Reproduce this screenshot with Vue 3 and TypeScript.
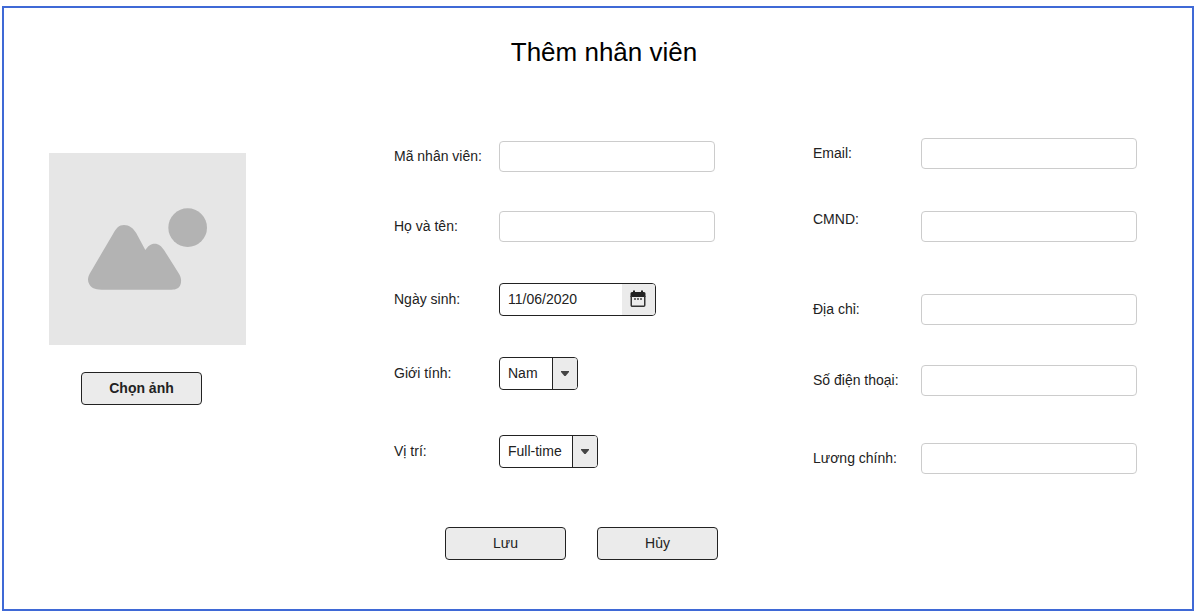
<script setup lang="ts">
import { reactive } from 'vue'

interface TextField {
  key: 'email' | 'idCard' | 'address' | 'phone' | 'salary'
  label: string
  top?: boolean
}

const contactFields: TextField[] = [
  { key: 'email', label: 'Email:' },
  { key: 'idCard', label: 'CMND:', top: true },
  { key: 'address', label: 'Địa chỉ:' },
  { key: 'phone', label: 'Số điện thoại:' },
  { key: 'salary', label: 'Lương chính:' },
]

const employee = reactive({
  code: '',
  name: '',
  birthday: '11/06/2020',
  gender: 'Nam',
  position: 'Full-time',
  email: '',
  idCard: '',
  address: '',
  phone: '',
  salary: '',
})
</script>

<template>
  <main class="frame">
    <h1 class="title">Thêm nhân viên</h1>

    <form class="form" @submit.prevent>
      <section class="photo">
        <svg class="picture" viewBox="0 0 591 576" preserveAspectRatio="none" aria-hidden="true">
          <rect width="591" height="576" fill="#e6e6e6" />
          <circle cx="416" cy="224" r="58" fill="#b3b3b3" />
          <path
            fill="#b3b3b3"
            d="M122 362 L192 243 C201 226 210 216 225 216 C241 216 252 225 262 241 L289 291 C297 279 305 272 317 272 C329 272 337 279 345 291 L390 362 C397 373 398 386 394 396 C389 406 382 410 368 410 H157 C137 410 126 404 121 394 C115 384 116 373 122 362 Z"
          />
        </svg>
        <button class="btn btn-photo" type="button">Chọn ảnh</button>
      </section>

      <section class="personal">
        <div class="rows rows-personal">
          <div class="field">
            <label for="code">Mã nhân viên:</label>
            <input id="code" v-model="employee.code" class="text" type="text" />
          </div>
          <div class="field">
            <label for="name">Họ và tên:</label>
            <input id="name" v-model="employee.name" class="text" type="text" />
          </div>
          <div class="field">
            <label for="birthday">Ngày sinh:</label>
            <div class="box date">
              <input id="birthday" v-model="employee.birthday" type="text" />
              <button type="button" aria-label="Ngày sinh">
                <svg width="16" height="18" viewBox="0 0 16 18" aria-hidden="true">
                  <path d="M3 0.5h2v3H3zM11 0.5h2v3h-2z" fill="#222" />
                  <path d="M2 2h12a1.5 1.5 0 0 1 1.5 1.5V7H0.5V3.5A1.5 1.5 0 0 1 2 2z" fill="#222" />
                  <path
                    d="M1.25 6v9.2a1 1 0 0 0 1 1h11.5a1 1 0 0 0 1-1V6"
                    fill="none"
                    stroke="#333"
                    stroke-width="1.5"
                  />
                  <path d="M4 8.2h2v1.6H4zM7 8.2h2v1.6H7zM10 8.2h2v1.6h-2z" fill="#444" />
                </svg>
              </button>
            </div>
          </div>
          <div class="field">
            <label for="gender">Giới tính:</label>
            <div class="box select select-short">
              <select id="gender" v-model="employee.gender">
                <option>Nam</option>
              </select>
              <span class="arrow">
                <svg width="8" height="5" viewBox="0 0 8 5" aria-hidden="true">
                  <path d="M0 0h8v1L4.6 5H3.4L0 1z" fill="#444" />
                </svg>
              </span>
            </div>
          </div>
          <div class="field">
            <label for="position">Vị trí:</label>
            <div class="box select select-long">
              <select id="position" v-model="employee.position">
                <option>Full-time</option>
              </select>
              <span class="arrow">
                <svg width="8" height="5" viewBox="0 0 8 5" aria-hidden="true">
                  <path d="M0 0h8v1L4.6 5H3.4L0 1z" fill="#444" />
                </svg>
              </span>
            </div>
          </div>
        </div>
        <div class="actions">
          <button class="btn" type="submit">Lưu</button>
          <button class="btn" type="button">Hủy</button>
        </div>
      </section>

      <section class="rows rows-contact">
        <div v-for="f in contactFields" :key="f.key" class="field" :class="{ 'label-top': f.top }">
          <label :for="f.key">{{ f.label }}</label>
          <input :id="f.key" v-model="employee[f.key]" class="text" type="text" />
        </div>
      </section>
    </form>
  </main>
</template>

<style>
body {
  margin: 0;
  background: #fff;
}
</style>

<style scoped>
.frame {
  box-sizing: border-box;
  min-height: calc(100vh - 9px);
  margin: 6px 6px 3px 2px;
  border: 2px solid #3f69d6;
  padding: 28px 55px 48px 45px;
  color: #222;
  font: 14px/16px "Liberation Sans", Arial, sans-serif;
}

.title {
  margin: 0 0 70px;
  padding-left: 22px;
  color: #000;
  font-size: 26px;
  font-weight: 400;
  line-height: 32px;
  text-align: center;
}

.form {
  display: grid;
  grid-template-columns: 345fr 419fr 324fr;
  align-items: start;
}

.photo {
  display: flex;
  flex-direction: column;
  align-items: flex-start;
  gap: 27px;
  padding-top: 15px;
}

.picture {
  display: block;
  width: 197px;
  height: 192px;
}

.btn-photo {
  margin-left: 32px;
  font-weight: 700;
}

.rows {
  display: grid;
  align-items: start;
}

.rows-personal {
  padding-top: 3px;
  grid-template-columns: 321px;
  grid-template-rows: 70px 72px 74px 78px auto;
}

.rows-contact {
  grid-template-rows: 73px 83px 71px 78px auto;
}

.field {
  display: flex;
  align-items: center;
}

.field label {
  flex: none;
  width: 105px;
  padding-bottom: 2px;
}

.rows-contact label {
  width: 108px;
}

.field.label-top {
  align-items: flex-start;
}

.text {
  box-sizing: border-box;
  flex: 1;
  min-width: 0;
  height: 31px;
  border: 1px solid #ccc;
  border-radius: 4px;
  padding: 0 8px 2px;
  background: #fff;
  color: inherit;
  font: inherit;
}

.box {
  box-sizing: border-box;
  display: flex;
  height: 33px;
  border: 1px solid #222;
  border-radius: 4px;
  overflow: hidden;
  background: #fff;
}

.date {
  width: 157px;
}

.date input {
  flex: 1;
  min-width: 0;
  border: 0;
  padding: 0 8px 2px;
  background: none;
  color: inherit;
  font: inherit;
}

.date button {
  display: flex;
  flex: none;
  align-items: center;
  justify-content: center;
  box-sizing: border-box;
  width: 33px;
  border: 0;
  padding: 0 1px 1px 0;
  background: #ebebeb;
}

.select {
  position: relative;
}

.select-short {
  width: 79px;
}

.select-long {
  width: 99px;
}

.select select {
  width: 100%;
  border: 0;
  padding: 0 26px 2px 8px;
  appearance: none;
  background: none;
  color: inherit;
  font: inherit;
}

.arrow {
  position: absolute;
  top: 0;
  right: 0;
  bottom: 0;
  display: flex;
  align-items: center;
  justify-content: center;
  width: 24px;
  border-left: 1px solid #222;
  background: #ebebeb;
  pointer-events: none;
}

.actions {
  display: flex;
  gap: 31px;
  margin: 59px 0 0 51px;
}

.btn {
  box-sizing: border-box;
  width: 121px;
  height: 33px;
  border: 1px solid #222;
  border-radius: 4px;
  padding: 0 0 2px;
  background: #ebebeb;
  color: #222;
  font-family: inherit;
  font-size: 14px;
  line-height: 16px;
}
</style>
